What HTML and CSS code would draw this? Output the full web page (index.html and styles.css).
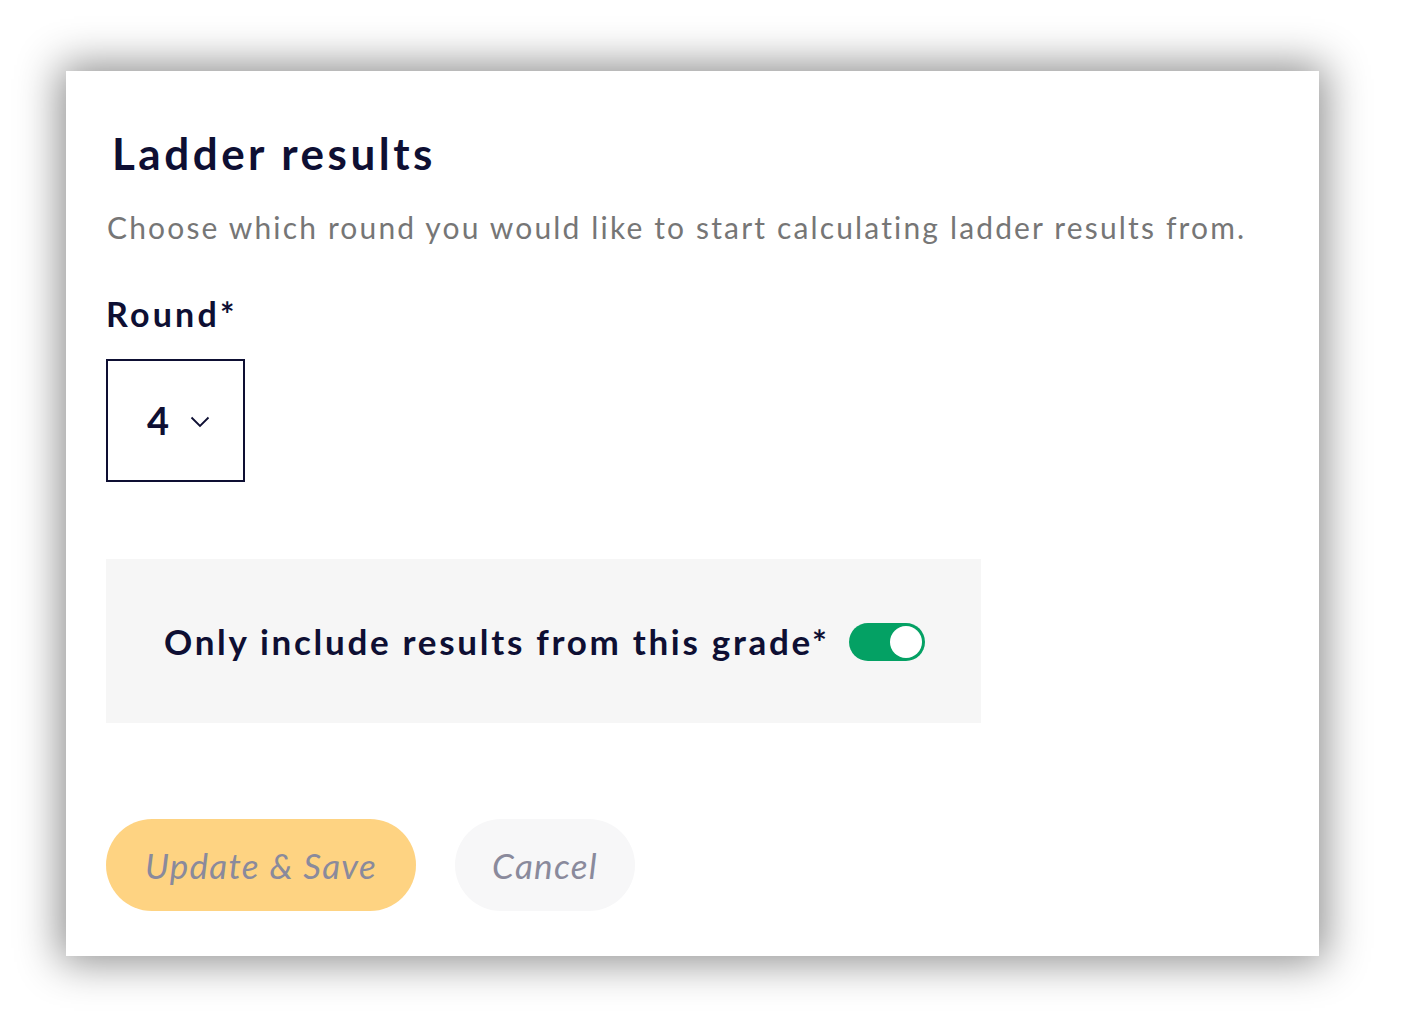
FILE: index.html
```html
<!DOCTYPE html>
<html>
<head>
<meta charset="utf-8">
<link rel="stylesheet" href="styles.css">
</head>
<body>
<div class="card">
  <h1 class="title">Ladder results</h1>
  <p class="subtitle">Choose which round you would like to start calculating ladder results from.</p>
  <div class="label">Round*</div>
  <div class="select">
    <span class="select-value">4</span>
    <svg class="chevron" width="20" height="12" viewBox="0 0 20 12"><path d="M1.5 1.5 L10 10 L18.5 1.5" fill="none" stroke="#0e0f33" stroke-width="1.8"/></svg>
  </div>
  <div class="panel">
    <span class="panel-label">Only include results from this grade*</span>
    <span class="toggle"><span class="knob"></span></span>
  </div>
  <div class="actions">
    <button class="btn btn-primary">Update &amp; Save</button>
    <button class="btn btn-secondary">Cancel</button>
  </div>
</div>
</body>
</html>
```
FILE: styles.css
```css
html, body {
  margin: 0;
  padding: 0;
  background: #ffffff;
}
body {
  font-family: "Lato", "Noto Sans", sans-serif;
  color: #0e0f33;
  padding: 71px 0 73px 66px;
}
.card {
  width: 1253px;
  height: 885px;
  box-sizing: border-box;
  background: #ffffff;
  box-shadow: 0 0 40px 6px rgba(0, 0, 0, 0.45);
  padding: 52px 40px 0 40px;
}
.title {
  margin: 0 0 0 6px;
  font-size: 44px;
  font-weight: 700;
  letter-spacing: 3.5px;
  line-height: 60px;
}
.subtitle {
  margin: 24px 0 0 1px;
  font-size: 30px;
  font-weight: 400;
  letter-spacing: 2.15px;
  color: #767676;
  line-height: 40px;
}
.label {
  margin-top: 47px;
  font-size: 34px;
  font-weight: 700;
  letter-spacing: 3.2px;
  line-height: 40px;
}
.select {
  margin-top: 25px;
  width: 139px;
  height: 123px;
  box-sizing: border-box;
  border: 2px solid #0e0f33;
  display: flex;
  align-items: center;
  padding-left: 39px;
  gap: 21px;
}
.select-value {
  font-size: 38px;
  font-weight: 700;
  line-height: 1;
  padding-bottom: 2px;
}
.chevron {
  display: block;
  margin-top: 2px;
}
.panel {
  margin-top: 77px;
  width: 875px;
  height: 164px;
  background: #f6f6f6;
  display: flex;
  align-items: center;
  padding-left: 58px;
  box-sizing: border-box;
  gap: 19px;
}
.panel-label {
  font-size: 35px;
  font-weight: 700;
  letter-spacing: 2.7px;
}
.toggle {
  width: 76px;
  height: 38px;
  border-radius: 19px;
  background: #04a164;
  display: flex;
  align-items: center;
  justify-content: flex-end;
  padding: 3px;
  box-sizing: border-box;
  margin-top: 1px;
}
.knob {
  width: 32px;
  height: 32px;
  border-radius: 50%;
  background: #ffffff;
}
.actions {
  margin-top: 96px;
  display: flex;
  gap: 39px;
}
.btn {
  border: none;
  height: 92px;
  border-radius: 46px;
  font-family: "Lato", "Noto Sans", sans-serif;
  font-style: italic;
  font-size: 35px;
  font-weight: 400;
  letter-spacing: 1.3px;
  color: #8a8a9c;
  padding: 0;
}
.btn-primary {
  width: 310px;
  background: #fed382;
}
.btn-secondary {
  width: 180px;
  background: #f7f7f8;
}
```
